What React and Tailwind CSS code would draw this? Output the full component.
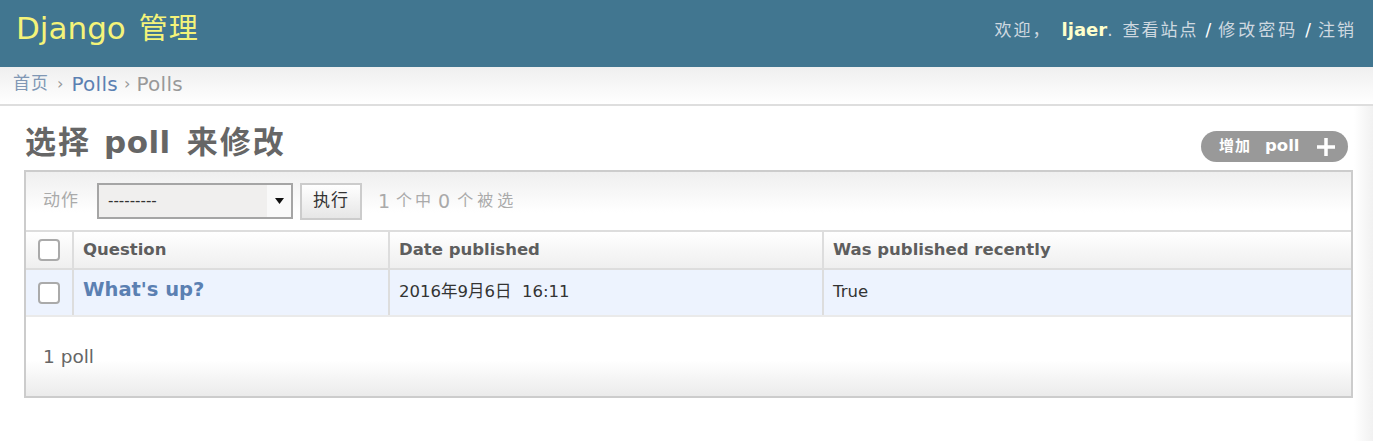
function Checkbox() {
  return <span className="block w-[22px] h-[22px] rounded-[4px] border-2 border-[#aaaaaa] bg-white" />
}

function HeaderBar() {
  return (
    <div className="h-[67px] bg-[#417690] flex justify-between items-start">
      <h1 className="pl-4 pt-[10px] text-[31px] leading-[36px] text-[#f4f379] whitespace-nowrap">
        Django<span className="ml-[13px] text-[29px] tracking-[1px]">管理</span>
      </h1>
      <div className="pt-[18px] pr-[17px] text-[17px] leading-[24px] text-[#cfd9e0] whitespace-nowrap flex items-center">
        <span className="tracking-[2px]">欢迎，</span>
        <strong className="ml-[10px] text-[18px] font-bold text-[#ffffcc]">ljaer</strong>
        <span className="mr-[10px]">.</span>
        <a className="tracking-[2px]">查看站点</a>
        <span className="mx-[7px] text-white">/</span>
        <a className="tracking-[3px]">修改密码</a>
        <span className="mx-[7px] text-white">/</span>
        <a className="tracking-[2px]">注销</a>
      </div>
    </div>
  )
}

function Breadcrumbs() {
  return (
    <div className="h-[39px] border-b-2 border-[#dedede] bg-gradient-to-b from-[#efefef] to-white flex items-center pl-[13px] pb-[3px] text-[20px] text-[#999]">
      <a className="text-[17px] text-[#8097b4] tracking-[1px]">首页</a>
      <span className="mx-[8px] text-[16px]">›</span>
      <a className="text-[#5b80b2] tracking-[0.3px]">Polls</a>
      <span className="mx-[6px] text-[16px]">›</span>
      <span className="tracking-[0.3px]">Polls</span>
    </div>
  )
}

function ActionsBar() {
  return (
    <div className="h-[60px] border-b-2 border-[#dddddd] bg-gradient-to-b from-[#efefef] to-white to-70% flex items-center pl-[17px]">
      <label className="text-[17px] text-[#aaa] tracking-[1px]">动作</label>
      <div className="ml-[18px] w-[196px] h-[36px] border-2 border-[#a5a5a5] bg-[#f0efee] flex items-center">
        <span className="flex-1 pl-[9px] text-[15px] text-[#333]">---------</span>
        <span className="w-[24px] h-full bg-[#f9f9f9] flex items-center justify-center">
          <svg width="9" height="6" viewBox="0 0 9 6">
            <path d="M0 0h9L4.5 6z" fill="#111" />
          </svg>
        </span>
      </div>
      <button className="ml-[7px] w-[62px] h-[37px] border-2 border-[#cccccc] bg-gradient-to-b from-white to-[#e6e6e6] text-[17px] text-[#333] tracking-[1px]">
        执行
      </button>
      <span className="ml-[16px] text-[#aaa] flex items-center">
        <span className="text-[19px]">1</span>
        <span className="ml-[6px] text-[16px] tracking-[3px]">个中</span>
        <span className="ml-[4px] text-[19px]">0</span>
        <span className="ml-[7px] text-[16px] tracking-[4px]">个被选</span>
      </span>
    </div>
  )
}

function ResultTable() {
  const cols = 'grid grid-cols-[46px_316px_434px_1fr]'
  return (
    <div>
      <div className={`${cols} h-[38px] border-b-2 border-[#dddddd] bg-gradient-to-b from-white to-[#efefef] text-[16.5px] font-bold text-[#5e5e5e]`}>
        <div className="flex items-center justify-center">
          <Checkbox />
        </div>
        <div className="border-l-2 border-[#dddddd] pl-[9px] flex items-center">Question</div>
        <div className="border-l-2 border-[#dddddd] pl-[9px] flex items-center">Date published</div>
        <div className="border-l-2 border-[#dddddd] pl-[9px] flex items-center">Was published recently</div>
      </div>
      <div className={`${cols} h-[47px] border-b-2 border-[#eaeaea] bg-[#edf3fe] text-[16.5px] text-[#333]`}>
        <div className="flex items-center justify-center">
          <Checkbox />
        </div>
        <div className="border-l-2 border-[#dddddd] pl-[9px] pb-[6px] flex items-center">
          <a className="text-[19.5px] font-bold text-[#5b80b2]">What's up?</a>
        </div>
        <div className="border-l-2 border-[#dddddd] pl-[9px] flex items-center whitespace-pre">2016年9月6日  16:11</div>
        <div className="border-l-2 border-[#dddddd] pl-[9px] flex items-center">True</div>
      </div>
    </div>
  )
}

export default function App() {
  return (
    <div className="min-h-screen bg-white font-['DejaVu_Sans','Noto_Sans_CJK_SC',sans-serif]">
      <HeaderBar />
      <Breadcrumbs />
      <div className="h-[335px] pt-[25px] pl-[24px] pr-[20px] bg-[linear-gradient(to_right,white_98.6%,#f1f1f1)]">
        <div className="h-[31px] flex justify-between items-start">
          <h1 className="-mt-[4px] leading-[31px] text-[31px] font-bold text-[#666] whitespace-nowrap">
            <span className="tracking-[2px] ml-[1px]">选择</span>
            <span className="ml-[13px] tracking-[0.5px]">poll</span>
            <span className="ml-[16px] tracking-[2px]">来修改</span>
          </h1>
          <a className="mr-[5px] h-[31px] w-[147px] rounded-full bg-[#999] text-white flex items-center pl-[18px]">
            <span className="text-[15px] font-bold tracking-[1px]">增加</span>
            <span className="ml-[14px] text-[16.5px] font-bold">poll</span>
            <svg width="20" height="20" viewBox="0 0 20 20" className="ml-[17px]">
              <path d="M10 1v18M1 10h18" stroke="white" strokeWidth="3.5" />
            </svg>
          </a>
        </div>
        <div className="mt-[8px] border-2 border-[#cccccc]">
          <ActionsBar />
          <ResultTable />
          <div className="h-[79px] bg-gradient-to-b from-white from-55% to-[#ebebeb] flex items-center pl-[17px] text-[18.5px] text-[#666]">
            1 poll
          </div>
        </div>
      </div>
    </div>
  )
}
